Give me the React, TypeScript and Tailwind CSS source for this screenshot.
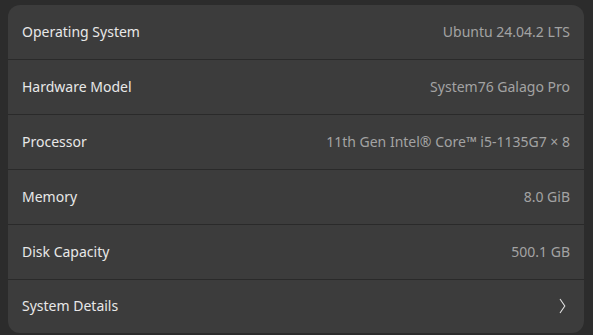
const rows: { label: string; value: string }[] = [
  { label: "Operating System", value: "Ubuntu 24.04.2 LTS" },
  { label: "Hardware Model", value: "System76 Galago Pro" },
  { label: "Processor", value: "11th Gen Intel® Core™ i5-1135G7 × 8" },
  { label: "Memory", value: "8.0 GiB" },
  { label: "Disk Capacity", value: "500.1 GB" },
];

function Chevron() {
  return (
    <svg width="7" height="16" viewBox="0 0 7 16" fill="none">
      <path d="M1 1 L5.8 8 L1 15" stroke="#e0e0e0" strokeWidth="1.1" />
    </svg>
  );
}

export default function App() {
  return (
    <div
      className="h-[335px] w-[593px] bg-[#2c2c2c] pl-2 pr-[9px] pt-[5px] pb-[2px]"
      style={{ fontFamily: '"Noto Sans", "Open Sans", sans-serif' }}
    >
      <div className="flex h-full flex-col overflow-hidden rounded-xl bg-[#3c3c3c]">
        {rows.map((row) => (
          <div
            key={row.label}
            className="flex h-[55px] shrink-0 items-center justify-between border-b border-[#2a2a2a] pb-[2px] pl-[14px] pr-[14px]"
          >
            <span className="text-[14px] text-[#e8e8e8]">{row.label}</span>
            <span className="text-[14px] text-[#a3a3a3]">{row.value}</span>
          </div>
        ))}
        <div className="flex flex-1 items-center justify-between pb-[2px] pl-[14px] pr-[18px]">
          <span className="text-[14px] text-[#e8e8e8]">System Details</span>
          <Chevron />
        </div>
      </div>
    </div>
  );
}
